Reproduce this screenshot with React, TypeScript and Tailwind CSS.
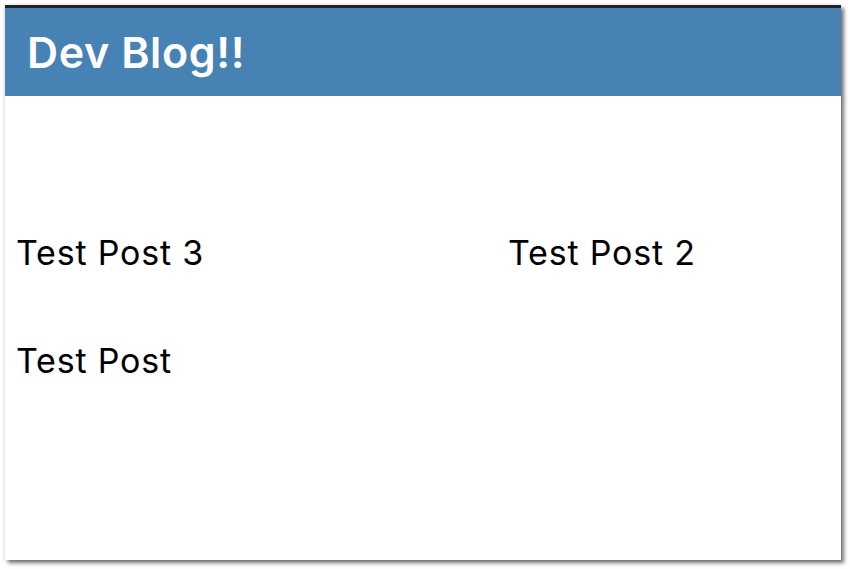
import React from "react";

const posts = [
  { title: "Test Post 3" },
  { title: "Test Post 2" },
  { title: "Test Post" },
];

export default function App() {
  return (
    <div className="w-[850px] h-[569px] bg-white pl-[5px] pt-[5px] overflow-hidden">
      <div
        className="w-[836px] h-[555px] bg-white border-t-[3px] border-[#222222] shadow-[3px_3px_4px_rgba(0,0,0,0.55),-1px_0_3px_rgba(0,0,0,0.12)] flex flex-col"
        style={{ fontFamily: "Inter, 'Open Sans', sans-serif" }}
      >
        <header className="h-[88px] bg-[#4682B4] flex items-start pl-[22px] pt-[22px]">
          <h1 className="text-white text-[43px] leading-[44px] font-semibold tracking-[0.6px]">
            Dev Blog!!
          </h1>
        </header>
        <main className="grid grid-cols-[492px_1fr] gap-y-[68px] px-[11px] pt-[137px]">
          {posts.map((p) => (
            <h2 key={p.title} className="text-black text-[34px] leading-[40px] font-normal tracking-[0.8px]">
              {p.title}
            </h2>
          ))}
        </main>
      </div>
    </div>
  );
}
